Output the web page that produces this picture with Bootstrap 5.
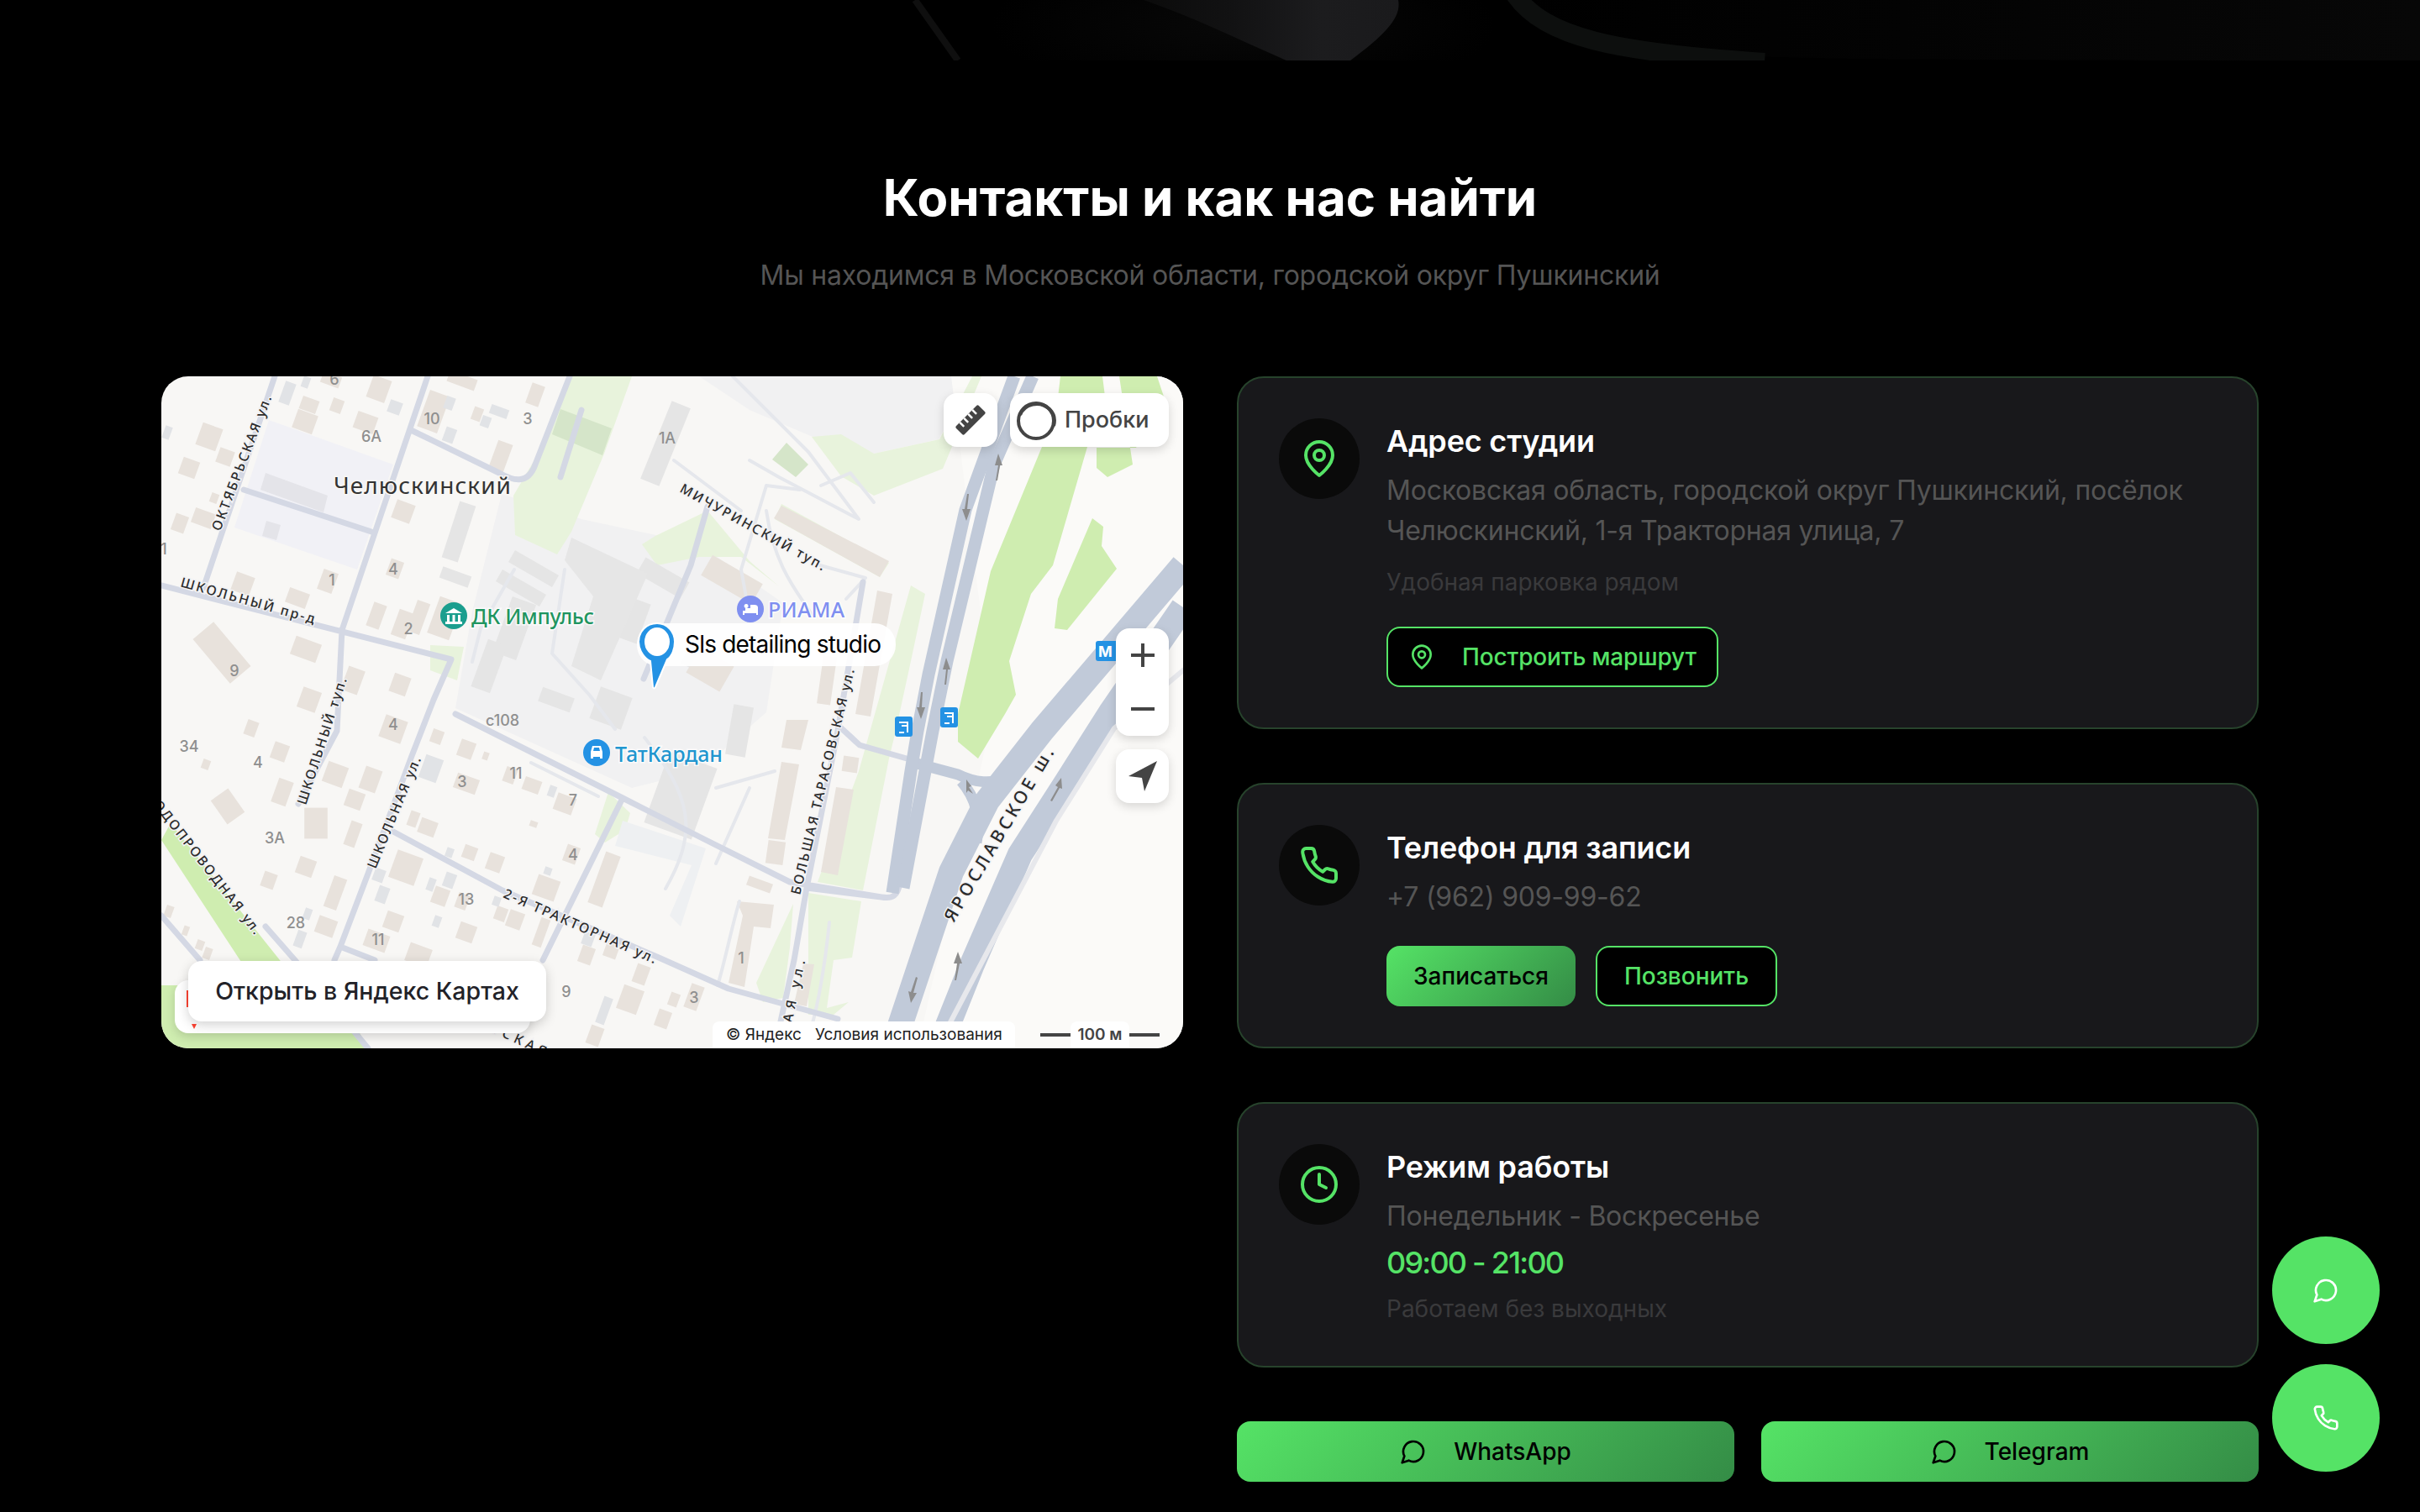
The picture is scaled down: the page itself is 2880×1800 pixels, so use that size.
<!DOCTYPE html>
<html lang="ru">
<head>
  <meta charset="UTF-8">
  <title>Контакты и как нас найти</title>
  <meta name="viewport" content="width=device-width, initial-scale=1.0">
  <link href="https://cdn.jsdelivr.net/npm/bootstrap@5.3.3/dist/css/bootstrap.min.css" rel="stylesheet">
  <style>
    body { background: #000; color: #fff; font-family: "Inter", "Liberation Sans", sans-serif; min-height: 1800px; }
    .hero-strip { height: 72px; display: block; width: 100%; }
    .contacts { width: 2496px; margin: 0 auto; padding-top: 127px; }
    .contacts-title { font-size: 60px; line-height: 72px; font-weight: 700; margin: 0 0 33px; }
    .contacts-sub { font-size: 32px; line-height: 48px; color: #555; margin: 0 0 96px; letter-spacing: -.22px; }
    .contact-cols { display: grid; grid-template-columns: 1216px 1216px; gap: 64px; }
    .right-stack { gap: 64px; }
    .messenger-row { gap: 32px; }
    .messenger-row .btn { gap: 32px; }

    .map-box { position: relative; height: 800px; border-radius: 32px; overflow: hidden; background: #f8f7f5; }
    .map-svg { display: block; }
    .mp-btn { position: absolute; background: #fff; border-radius: 16px; box-shadow: 0 4px 12px rgba(0,0,0,.15); display: flex; align-items: center; justify-content: center; color: #444; }
    .mp-ruler { left: 931px; top: 20px; width: 64px; height: 64px; }
    .mp-traffic { left: 1010px; top: 20px; width: 189px; height: 64px; font-size: 27px; font-weight: 500; gap: 8px; justify-content: flex-start; padding-left: 5px; }
    .mp-zoom { left: 1136px; top: 300px; width: 63px; height: 128px; flex-direction: column; justify-content: space-around; }
    .mp-locate { left: 1136px; top: 444px; width: 63px; height: 64px; }
    .mp-logo { left: 16px; top: 719px; width: 423px; height: 63px; justify-content: flex-start; padding-left: 14px; }
    .mp-open { left: 32px; top: 696px; width: 426px; height: 72px; font-size: 28.500px; font-weight: 500; color: #222228; box-shadow: 0 4px 14px rgba(0,0,0,.18); }
    .mp-copy { position: absolute; left: 656px; top: 768px; width: 360px; height: 32px; background: #fff; border-radius: 8px 8px 0 0; color: #222; font-size: 19px; line-height: 32px; padding-left: 16px; white-space: nowrap; }
    .mp-copy span { margin-left: 16px; }
    .mp-scale { position: absolute; left: 1046px; top: 768px; width: 142px; height: 32px; display: flex; align-items: center; justify-content: center; }
    .mp-scale::before { content: ""; position: absolute; left: 0; right: 0; top: 14px; height: 4px; background: #444; }
    .mp-scale span { position: relative; background: #fff; border-radius: 8px 8px 0 0; padding: 0 8px; font-size: 19px; font-weight: 600; line-height: 32px; color: #444; }

    .info-card { background: #18181b; border: 2px solid #27432c; border-radius: 32px; padding: 48px; flex-direction: row; gap: 32px; color: #fff; }
    .info-ico { width: 96px; height: 96px; border-radius: 50%; background: #0a0a0a; display: flex; align-items: center; justify-content: center; flex: none; }
    .info-title { font-size: 36px; line-height: 54px; font-weight: 600; margin: 0 0 8px; letter-spacing: -.2px; }
    .info-text { font-size: 32px; line-height: 48px; color: #555; margin: 0; letter-spacing: -.22px; }
    .info-note { font-size: 28px; line-height: 40px; color: #3a3a3c; margin: 0; }
    .info-time { font-size: 36px; line-height: 54px; color: #55e366; font-weight: 500; letter-spacing: -1.800px; }
    .note-after-text { margin-top: 17px; }
    .note-after-time { margin-top: 8px; }
    .call-row { margin-top: 34px; }
    .btn-lime, .btn-lime:hover { height: 72px; border: 0; border-radius: 16px; background: linear-gradient(135deg, #55e366, #348c46); color: #000; font-size: 28px; font-weight: 500; padding: 0 32px; display: inline-flex; align-items: center; justify-content: center; }
    .btn-edge, .btn-edge:hover { height: 72px; border: 2px solid #55e366; border-radius: 16px; background: #000; color: #55e366; font-size: 28px; font-weight: 500; padding: 0 32px; display: inline-flex; align-items: center; justify-content: center; }
    .route-btn, .route-btn:hover { gap: 32px; padding: 0 24px; margin-top: 33px; letter-spacing: -.15px; }
    .fab-stack { position: absolute; left: 2704px; top: 1472px; gap: 24px; }
    .fab-round { width: 128px; height: 128px; border-radius: 50%; background: #55e366; border: 0; display: flex; align-items: center; justify-content: center; padding: 0; }

    .num { font: 500 18px "Inter", sans-serif; fill: #8f8f8f; text-anchor: middle; }
    .st { font: 500 16px "Noto Sans", sans-serif; fill: #2b2b2b; paint-order: stroke; stroke: #f2f2f4; stroke-width: 3px; }
    .map-big-label { font-size: 21px; }
    .map-place { font: 400 28px "Noto Sans", sans-serif; fill: #333; paint-order: stroke; stroke: #f8f7f5; stroke-width: 3px; }
    .map-metro { font: 700 18px "Inter", sans-serif; fill: #fff; }
    .map-pin-label { font: 400 28px "Inter", sans-serif; fill: #000; }
    .poi { font: 500 25px "Noto Sans", sans-serif; paint-order: stroke; stroke: #fff; stroke-opacity: .8; stroke-width: 3px; }
    .rd, .rd2, .rd3, .hw, .hw2 { fill: none; stroke-linejoin: round; stroke-linecap: round; }
    .rd { stroke: #d4d8e4; stroke-width: 7; }
    .rd2 { stroke: #e5e7ec; stroke-width: 4; }
    .rd3 { stroke: #e7e8ec; stroke-width: 6; }
    .hw { stroke: #c1cad9; stroke-width: 15; stroke-linecap: butt; }
    .hw2 { stroke: #c1cad9; stroke-width: 30; stroke-linecap: butt; }
    .hw-link { stroke-width: 13; }
  </style>
</head>
<body class="position-relative">
  <svg class="hero-strip" viewBox="0 0 2880 72" preserveAspectRatio="none">
    <defs>
      <linearGradient id="lump" x1="0" y1="0" x2="1" y2="0"><stop offset="0" stop-color="#0b0b0b"/><stop offset=".35" stop-color="#121213"/><stop offset=".7" stop-color="#1c1c1e"/><stop offset="1" stop-color="#1a1a1c"/></linearGradient>
      <radialGradient id="haze"><stop offset="0" stop-color="#080808"/><stop offset="1" stop-color="#000"/></radialGradient>
      <linearGradient id="fade" x1="0" y1="0" x2="1" y2="0"><stop offset="0" stop-color="#000"/><stop offset="1" stop-color="#070707"/></linearGradient>
    </defs>
    <rect width="2880" height="72" fill="#000"/>
    <ellipse cx="1480" cy="30" rx="300" ry="90" fill="url(#haze)"/>
    <path d="M1803 0C1850 20 1900 40 2000 60C2050 70 2200 72 2880 72V0Z" fill="url(#fade)"/>
    <path d="M1361 0C1420 20 1480 50 1531 72H1607C1650 40 1668 20 1664 0Z" fill="url(#lump)"/>
    <path d="M1089 0L1140 72" stroke="#0f0f0f" stroke-width="8" fill="none"/>
    <path d="M1803 -6C1840 45 1920 62 2100 74" stroke="#0d0f0e" stroke-width="22" fill="none"/>
  </svg>

  <section class="contacts">
    <h2 class="contacts-title text-center">Контакты и как нас найти</h2>
    <p class="contacts-sub text-center">Мы находимся в Московской области, городской округ Пушкинский</p>

    <div class="contact-cols">
      <div class="map-box">
        <svg class="map-svg" width="1216" height="800" viewBox="0 0 1216 800">
          <!-- зоны -->
          <path fill="#f1f1f2" d="M640 0L968 0L925 75L848 92L775 72L700 40Z"/>
          <path fill="#f1f1f2" d="M405 140L500 170L640 200L740 270L720 400L640 470L560 490L350 395L370 280Z"/>
          <path fill="#fbfaf8" d="M940 0H1216V800H900L990 400Z"/>
          <path fill="#f1f1f6" d="M128 52L276 105L233 230L87 180Z"/>
          <path fill="#e4e4e9" d="M124 115L198 142L193 162L118 135ZM125 172L142 177L137 195L120 190Z"/>
          <!-- зелень -->
          <g fill="#e8f3dc">
            <path d="M488 0L560 0L527 92L488 185L471 212L421 189L419 142L462 69Z"/>
            <path d="M774 72L809 69L848 92L926 75L965 0L976 0L930 110L848 142L809 119Z"/>
            <path d="M572 200L588 190L650 160L700 220L735 250L690 215L640 215L590 225Z"/>
            <path d="M730 170L855 239L866 222L738 152Z"/>
            <path d="M892 249L909 259L892 339L874 422L866 455L835 612L781 602L830 470Z"/>
            <path d="M770 615L833 625L822 692L800 695L792 752L818 745L800 760L770 760L770 700ZM752 628L708 722L716 745L740 740L748 680Z"/>
            <path d="M532 495L558 520L552 540L528 555L516 545Z"/>
            <path d="M320 320L360 322L352 362L320 350Z"/>
          </g>
          <path fill="#d5e5c9" d="M475 39L536 62L525 94L465 69ZM744 79L770 105L755 120L727 99Z"/>
          <g fill="#cfedb0">
            <path d="M1048 84L1102 84L1061 225L1035 259L1009 339L1017 379L1004 402L972 455L948 435L948 402L987 232Z"/>
            <path d="M1070 0L1120 0L1125 40L1100 84L1060 84Z"/>
            <path d="M1140 0L1185 0L1195 30L1160 85L1113 85L1113 109L1126 120L1156 105Z"/>
            <path d="M1108 169L1121 179L1119 202L1137 229L1078 302L1063 300L1067 265Z"/>
            <path d="M0 552L11 532L145 700L145 720L110 720Z"/>
            <path d="M0 725L30 725L30 780L235 780L246 800L0 800Z"/>
          </g>
          <!-- здания -->
          <g id="blocks"></g>
          <g fill="#e8e2dc">
            <path d="M738 154L866 220L855 239L729 169ZM852 255L870 259L844 405L826 402ZM738 459L759 462L742 552L722 550ZM803 489L824 492L805 594L785 590ZM685 625L729 629L725 657L705 655L694 727L675 722L692 642ZM764 699L777 700L768 750L753 747ZM744 409L770 409L761 445L738 442Z"/>
          </g>
          <path fill="#e6e6e6" d="M488 192L579 235L523 362L488 345L514 262L480 219Z"/>
          <path fill="#eef0f2" d="M549 529L648 562L618 655L605 642L631 582L540 559Z"/>
          <!-- дороги -->
          <path class="rd2" d="M575 430C630 500 640 540 600 610M688 625C680 650 670 700 662 725M660 490L730 470M700 490L660 580M795 650C790 700 780 760 770 785M610 100L650 130L690 160M760 135L720 130L690 230L700 285M784 225L838 240L815 265M720 160C730 230 760 260 775 285M480 230L465 330L510 380L540 420M420 230L380 300L370 340M440 460L520 500"/>
          <path class="rd2" d="M680 0L770 90L830 170L735 120L700 100M785 130L820 115L848 150"/>
          <path class="rd" d="M135 0L50 252M317 0L215 302L209 422L163 509M297 64L402 115C418 124 436 130 445 105L486 0M98 135L250 185M0 249L345 337L324 385L298 452L246 592L213 679L206 695M350 402L549 502L648 552L748 602L857 620C870 622 876 620 880 600L891 535L911 465M276 542L406 612L592 692L675 729L805 765M549 502L454 695M213 679L254 695M835 245L805 422L768 609L753 695L730 800M768 609L857 620M124 655L159 695L246 800M0 642L46 695"/>
          <path class="rd" d="M500 40L475 120M650 155L630 225L574 360"/>
          <path class="rd" d="M805 415L831 439L887 455"/>
          <path class="hw hw-link" d="M892 459L948 474C968 484 990 486 1004 477L1035 449M952 482C972 505 975 530 970 555"/>
          <path class="hw" d="M1015 0L957 159L913 355L900 422L892 470L870 615"/>
          <path class="hw" d="M1037 0L991 105L935 339L918 422L909 470L883 609"/>
          <path class="hw2" d="M1216 225L1048 422L983 505L940 590L870 800"/>
          <path class="hw2" d="M1216 275L1130 400L1078 482L1022 569L965 700L925 800"/>
          <path class="rd3" d="M1216 350L1134 419L1065 529L939 769L925 800"/>
          <!-- стрелки -->
          <g fill="#8d8d8d">
            <path d="M996 92l5 14h-3l-3 18h-2l3-18h-4ZM948 685l5 14h-3l-4 20h-2l3-20h-4ZM934 335l5 14h-3l-2 18h-2l2-18h-4ZM1071 478l1 13-3-1-9 16-2-1 9-16-3-2Z"/>
            <path d="M958 172l-5-14h3l3-18h2l-2 18h4ZM904 408l-5-14h3l2-18h2l-1 18h4ZM892 746l-3-14 3 1 6-18 2 1-5 18 4 0ZM958 480l6 8-3 1 5 8 -6-4-2 3Z"/>
          </g>
          <!-- номера домов -->
          <text class="num" x="206" y="10">6</text><text class="num" x="250" y="78">6А</text><text class="num" x="322" y="57">10</text><text class="num" x="436" y="57">3</text>
          <text class="num" x="602" y="80">1А</text><text class="num" x="276" y="236">4</text><text class="num" x="203" y="249">1</text><text class="num" x="3" y="212">1</text>
          <text class="num" x="294" y="307">2</text><text class="num" x="87" y="357">9</text><text class="num" x="406" y="416">с108</text><text class="num" x="276" y="421">4</text>
          <text class="num" x="33" y="447">34</text><text class="num" x="115" y="466">4</text><text class="num" x="135" y="556">3А</text><text class="num" x="160" y="657">28</text>
          <text class="num" x="258" y="677">11</text><text class="num" x="358" y="489">3</text><text class="num" x="422" y="479">11</text><text class="num" x="490" y="511">7</text>
          <text class="num" x="490" y="576">4</text><text class="num" x="363" y="629">13</text><text class="num" x="482" y="739">9</text><text class="num" x="634" y="746">3</text><text class="num" x="690" y="699">1</text>
          <!-- подписи улиц -->
          <text class="st" transform="translate(70 185) rotate(-69)" textLength="171">ОКТЯБРЬСКАЯ ул.</text>
          <text class="st" transform="translate(22 250) rotate(15.6)" textLength="165">ШКОЛЬНЫЙ пр-д</text>
          <text class="st" transform="translate(172 511) rotate(-72)" textLength="158">ШКОЛЬНЫЙ туп.</text>
          <text class="st" transform="translate(255 587) rotate(-67.6)" textLength="142">ШКОЛЬНАЯ ул.</text>
          <text class="st" transform="translate(-18 500) rotate(52)" textLength="210">ВОДОПРОВОДНАЯ ул.</text>
          <text class="st" transform="translate(406 620) rotate(23.7)" textLength="197">2-Я ТРАКТОРНАЯ ул.</text>
          <text class="st" transform="translate(616 137) rotate(29)" textLength="195">МИЧУРИНСКИЙ туп.</text>
          <text class="st" transform="translate(760 618) rotate(-76.4)" textLength="276">БОЛЬШАЯ ТАРАСОВСКАЯ ул.</text>
          <text class="st" transform="translate(744 800) rotate(-78)" textLength="106">ЕКАЯ ул.</text>
          <text class="st" transform="translate(392 780) rotate(25)" textLength="70">ТСКАЯ</text>
          <text class="st map-big-label" transform="translate(943 651) rotate(-59.5)" textLength="236">ЯРОСЛАВСКОЕ ш.</text>
          <text class="map-place" x="205" y="140" textLength="211">Челюскинский</text>
          <!-- организации -->
          <circle cx="348" cy="285" r="16" fill="#1b9e8e"/>
          <path fill="#fff" d="M338 282l10-6 10 6ZM340 284h3v8h-3ZM346.500 284h3v8h-3ZM353 284h3v8h-3ZM338 292h20v3h-20Z"/>
          <text class="poi" x="369" y="295" textLength="146" fill="#1f9560">ДК Импульс</text>
          <circle cx="701" cy="277" r="16" fill="#7f8ff0"/>
          <path fill="#fff" d="M692 272h3v7h15v-4c0-2-2-3-4-3h-5v4h-6v-4zM692 279h18v5h-2v-2h-14v2h-2ZM696 271a2.500 2.500 0 1 0 .1 0Z"/>
          <text class="poi" x="722" y="287" textLength="91" fill="#7f8ff0">РИАМА</text>
          <circle cx="518" cy="448" r="16" fill="#2492e4"/>
          <path fill="#fff" d="M511 447l2-7h10l2 7v8h-3v-2h-8v2h-3ZM514 446h8l-1-4h-6Z"/>
          <text class="poi" x="540" y="459" textLength="128" fill="#2196cf">ТатКардан</text>
          <g fill="#2492e4">
            <rect x="873" y="405" width="21" height="24" rx="3"/>
            <rect x="927" y="394" width="21" height="24" rx="3"/>
          </g>
          <path fill="none" stroke="#fff" stroke-width="2" d="M878 412h10v12M881 416h7M878 424h6M932 401h10v12M935 405h7M932 413h6"/>
          <rect x="1112" y="315" width="30" height="24" rx="3" fill="#2492e4"/>
          <text class="map-metro" x="1115" y="334">М</text>
          <!-- метка -->
          <rect x="566" y="294" width="308" height="51" rx="25" fill="#fff" fill-opacity=".92"/>
          <path fill="#2492e4" stroke="#fff" stroke-width="2" d="M590 294c-13 0-22 10-22 22 0 12 9 21 14 23l3 31c1 2 2 2 3 0l14-33c6-4 9-13 9-21 0-12-9-22-21-22Z"/>
          <ellipse cx="590" cy="316" rx="15" ry="17" fill="#fff"/>
          <text class="map-pin-label" x="623" y="329" textLength="234">Sls detailing studio</text>
        </svg>

        <button class="mp-btn mp-ruler border-0 p-0" aria-label="Линейка">
          <svg width="48" height="48" viewBox="0 0 48 48"><g transform="rotate(-45 24 24)"><rect x="5" y="17" width="38" height="14" rx="2" fill="#444"/><path stroke="#fff" stroke-width="2.500" d="M13 17v7M20 17v7M27 17v7M34 17v7"/></g></svg>
        </button>
        <button class="mp-btn mp-traffic border-0">
          <svg width="52" height="52" viewBox="0 0 52 52"><circle cx="26" cy="27" r="21" fill="#fff" stroke="#444" stroke-width="4"/><path d="M7 20C12 7 30 2 42 13C48 19 49 26 47 33" fill="none" stroke="#444" stroke-width="4"/></svg>
          <span>Пробки</span>
        </button>
        <div class="mp-btn mp-zoom">
          <svg width="32" height="32" viewBox="0 0 32 32"><path stroke="#444" stroke-width="4" d="M2 16h28M16 2v28"/></svg>
          <svg width="32" height="32" viewBox="0 0 32 32"><path stroke="#444" stroke-width="4" d="M2 16h28"/></svg>
        </div>
        <button class="mp-btn mp-locate border-0 p-0" aria-label="Моё местоположение">
          <svg width="40" height="40" viewBox="0 0 40 40"><path fill="#444" d="M37 2L3 20l16 2 3 16Z"/></svg>
        </button>
        <div class="mp-btn mp-logo"><svg width="14" height="52" viewBox="0 0 14 52"><path fill="#f43" d="M0 6h4v20H0ZM6 46h6l-3 6Z"/></svg></div>
        <a class="mp-btn mp-open text-decoration-none" href="#">Открыть в Яндекс Картах</a>
        <div class="mp-copy">© Яндекс<span>Условия использования</span></div>
        <div class="mp-scale"><span>100 м</span></div>
      </div>

      <div class="d-flex flex-column right-stack">
        <div class="card info-card">
          <div class="info-ico">
            <svg width="48" height="48" viewBox="0 0 24 24" fill="none" stroke="#55e366" stroke-width="2" stroke-linecap="round" stroke-linejoin="round"><path d="M20 10c0 6-8 12-8 12s-8-6-8-12a8 8 0 0 1 16 0Z"/><circle cx="12" cy="10" r="3"/></svg>
          </div>
          <div>
            <h3 class="info-title">Адрес студии</h3>
            <p class="info-text">Московская область, городской округ Пушкинский, посёлок Челюскинский, 1-я Тракторная улица, 7</p>
            <p class="info-note note-after-text">Удобная парковка рядом</p>
            <a class="btn btn-edge route-btn" href="#">
              <svg width="32" height="32" viewBox="0 0 24 24" fill="none" stroke="#55e366" stroke-width="2" stroke-linecap="round" stroke-linejoin="round"><path d="M20 10c0 6-8 12-8 12s-8-6-8-12a8 8 0 0 1 16 0Z"/><circle cx="12" cy="10" r="3"/></svg>
              Построить маршрут
            </a>
          </div>
        </div>

        <div class="card info-card">
          <div class="info-ico">
            <svg width="48" height="48" viewBox="0 0 24 24" fill="none" stroke="#55e366" stroke-width="2" stroke-linecap="round" stroke-linejoin="round"><path d="M22 16.920v3a2 2 0 0 1-2.180 2 19.790 19.790 0 0 1-8.630-3.070 19.500 19.500 0 0 1-6-6 19.790 19.790 0 0 1-3.070-8.670A2 2 0 0 1 4.110 2h3a2 2 0 0 1 2 1.720 12.840 12.840 0 0 0 .7 2.810 2 2 0 0 1-.45 2.110L8.090 9.910a16 16 0 0 0 6 6l1.270-1.270a2 2 0 0 1 2.110-.45 12.840 12.840 0 0 0 2.810.7A2 2 0 0 1 22 16.92z"/></svg>
          </div>
          <div>
            <h3 class="info-title">Телефон для записи</h3>
            <p class="info-text">+7 (962) 909-99-62</p>
            <div class="d-flex gap-4 call-row">
              <a class="btn btn-lime" href="#">Записаться</a>
              <a class="btn btn-edge" href="#">Позвонить</a>
            </div>
          </div>
        </div>

        <div class="card info-card">
          <div class="info-ico">
            <svg width="48" height="48" viewBox="0 0 24 24" fill="none" stroke="#55e366" stroke-width="2" stroke-linecap="round" stroke-linejoin="round"><circle cx="12" cy="12" r="10"/><polyline points="12 6 12 12 16 14"/></svg>
          </div>
          <div>
            <h3 class="info-title">Режим работы</h3>
            <p class="info-text">Понедельник - Воскресенье</p>
            <div class="info-time mt-1">09:00 - 21:00</div>
            <p class="info-note note-after-time">Работаем без выходных</p>
          </div>
        </div>

        <div class="d-flex messenger-row">
          <a class="btn btn-lime flex-fill w-50" href="#">
            <svg width="32" height="32" viewBox="0 0 24 24" fill="none" stroke="#000" stroke-width="2" stroke-linecap="round" stroke-linejoin="round"><path d="M7.900 20A9 9 0 1 0 4 16.100L2 22Z"/></svg>
            WhatsApp
          </a>
          <a class="btn btn-lime flex-fill w-50" href="#">
            <svg width="32" height="32" viewBox="0 0 24 24" fill="none" stroke="#000" stroke-width="2" stroke-linecap="round" stroke-linejoin="round"><path d="M7.900 20A9 9 0 1 0 4 16.100L2 22Z"/></svg>
            Telegram
          </a>
        </div>
      </div>
    </div>
  </section>

  <div class="fab-stack d-flex flex-column">
    <button class="fab-round" aria-label="Написать">
      <svg width="32" height="32" viewBox="0 0 24 24" fill="none" stroke="#fff" stroke-width="2" stroke-linecap="round" stroke-linejoin="round"><path d="M7.900 20A9 9 0 1 0 4 16.100L2 22Z"/></svg>
    </button>
    <button class="fab-round" aria-label="Позвонить">
      <svg width="32" height="32" viewBox="0 0 24 24" fill="none" stroke="#fff" stroke-width="2" stroke-linecap="round" stroke-linejoin="round"><path d="M22 16.920v3a2 2 0 0 1-2.180 2 19.790 19.790 0 0 1-8.630-3.070 19.500 19.500 0 0 1-6-6 19.790 19.790 0 0 1-3.070-8.670A2 2 0 0 1 4.110 2h3a2 2 0 0 1 2 1.720 12.840 12.840 0 0 0 .7 2.810 2 2 0 0 1-.45 2.110L8.090 9.910a16 16 0 0 0 6 6l1.270-1.270a2 2 0 0 1 2.110-.45 12.840 12.840 0 0 0 2.810.7A2 2 0 0 1 22 16.92z"/></svg>
    </button>
  </div>

  <script src="https://cdn.jsdelivr.net/npm/bootstrap@5.3.3/dist/js/bootstrap.bundle.min.js"></script>
  <script>
    // дома на карте: x, y, ширина, высота, [угол]
    const tan = [[259,15,20,24],[176,34,18,14],[209,35,12,14],[171,54,22,20],[243,55,22,18],[57,72,22,24],[76,96,16,16],[33,109,18,18],[50,169,22,16],[22,175,14,18],[63,145,8,10],[288,161,20,20],[97,247,20,20],[162,264,22,16],[198,244,16,22],[278,229,14,18],[256,285,14,26],[287,295,16,28],[306,287,14,34],[337,288,24,40],[172,325,28,20],[72,329,28,60,-40],[228,362,18,26],[284,367,18,20],[176,385,20,22],[445,22,14,22],[324,42,22,40],[376,45,10,14],[404,95,16,30],[358,5,30,12],[202,4,20,12],
      [276,420,24,24],[107,419,12,16],[141,447,16,18],[53,462,8,10],[79,512,22,30,-35],[144,495,16,26],[184,532,24,32,0],[207,474,22,22],[249,480,18,24],[230,504,18,18],[228,545,12,26],[328,429,12,14],[363,444,16,18],[386,452,6,8],[363,485,24,16],[415,475,12,16],[441,487,18,14],[480,509,20,18],[443,533,8,6],[300,527,10,16],[317,537,18,16],[291,585,28,30],[367,567,14,14],[397,579,16,18],[488,569,14,18],[458,609,24,22],[527,599,16,56],[332,619,16,18],[358,625,12,16],[404,640,12,14],[421,647,16,18],[452,662,10,30],[363,662,18,18],[276,649,18,18],[256,672,24,18],[196,655,20,18],[207,615,14,34],[128,600,14,16],[172,584,18,18],[29,660,6,10],[9,637,8,12],[46,677,8,10],[55,687,8,12],[506,689,14,18],[536,682,14,18],[571,712,14,20],[558,742,22,26],[610,742,10,14],[597,765,14,18],[516,785,14,20],[306,689,24,20],[634,739,14,26],
      [679,242,60,24,30],[653,349,40,30,30],[792,362,14,50,8],[731,567,18,24,8],[712,605,26,10,20],[820,462,16,16,8]];
    const slate = [[150,20,12,24],[172,7,8,12],[278,37,14,14],[343,70,12,16],[343,32,10,14],[402,42,20,10],[386,54,10,12],[7,67,8,14],[321,467,20,26],[465,494,8,12],[343,567,8,10],[460,589,8,8],[259,594,12,14],[263,617,12,18],[321,605,8,14],[343,600,12,16],[328,649,8,12],[399,625,8,10],[174,640,8,12],[165,670,10,18],[508,670,12,14],[527,755,10,30]];
    const grey = [[443,229,60,16,30],[428,252,60,16,30],[354,185,20,70,18],[350,239,36,14,20],[420,300,30,70,20],[390,345,24,60,20],[470,385,40,18,20],[535,395,40,40,20],[618,499,60,90,20],[688,422,24,60,10],[597,240,60,22,30],[560,290,30,50,20],[600,80,24,100,22],[640,330,30,40,25]];
    let html = '';
    const add = (list, fill, k) => list.forEach(([x, y, w, h, a = 20]) => {
      w *= k; h *= k;
      html += `<rect x="${x - w / 2}" y="${y - h / 2}" width="${w}" height="${h}" fill="${fill}" transform="rotate(${a} ${x} ${y})"/>`;
    });
    add(grey, '#e5e5e5', 1);
    add(tan, '#e8e2dc', 1.15);
    add(slate, '#e1e3e6', 1.1);
    document.getElementById('blocks').innerHTML = html;
  </script>
</body>
</html>
